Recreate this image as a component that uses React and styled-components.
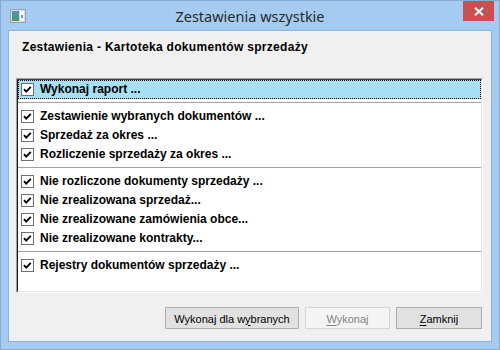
import React from "react";
import styled, { createGlobalStyle } from "styled-components";

const Global = createGlobalStyle`
  * { box-sizing: border-box; }
  html, body { margin: 0; padding: 0; background: #ffffff; }
  body { font-family: "Liberation Sans", Arial, sans-serif; }
`;

const Window = styled.div`
  width: 500px;
  height: 350px;
  background: #a6cbf0;
  border: 1px solid #86acd6;
  display: flex;
  flex-direction: column;
`;

const TitleBar = styled.div`
  height: 29px;
  display: grid;
  grid-template-columns: 1fr auto 1fr;
  align-items: center;
`;

const AppIcon = styled.svg`
  justify-self: start;
  margin-left: 9px;
  margin-top: 1px;
`;

const Title = styled.div`
  font-family: "Noto Sans", "Open Sans", sans-serif;
  font-size: 14.5px;
  color: #2a2a2a;
  line-height: 20px;
`;

const CloseButton = styled.div`
  justify-self: end;
  align-self: start;
  margin-right: 5px;
  width: 31px;
  height: 20px;
  background: #c75050;
  display: flex;
  align-items: center;
  justify-content: center;
`;

const Client = styled.div`
  flex: 1;
  margin: 0 7px 7px 7px;
  background: #f0f0f0;
  border: 1px solid #8eb2d8;
  padding: 9px 8px 12px 7px;
  display: flex;
  flex-direction: column;
`;

const Header = styled.div`
  font-weight: bold;
  font-size: 12px;
  line-height: 15px;
  letter-spacing: 0.3px;
  color: #000;
  margin-left: 6px;
`;

const ListBox = styled.div`
  margin-top: 23px;
  height: 215px;
  border-top: 1px solid #a0a0a0;
  border-left: 1px solid #a0a0a0;
  border-right: 1px solid #ffffff;
  border-bottom: 1px solid #ffffff;
`;

const ListInner = styled.div`
  height: 100%;
  background: #ffffff;
  border-top: 1px solid #404040;
  border-left: 1px solid #1a1a1a;
  border-right: 1px solid #e3e3e3;
  border-bottom: 1px solid #e3e3e3;
  display: flex;
  flex-direction: column;
`;

const Row = styled.div`
  height: 19px;
  display: flex;
  align-items: center;
  padding-left: ${(p) => (p.$selected ? "2px" : "3px")};
  gap: 6px;
  background: ${(p) => (p.$selected ? "#a7e0f4" : "transparent")};
  border: ${(p) => (p.$selected ? "1px dotted #000" : "none")};
`;

const RowText = styled.span`
  font-weight: bold;
  font-size: 12px;
  line-height: 19px;
  color: #000;
  white-space: nowrap;
`;

const Separator = styled.div`
  height: 8px;
  display: flex;
  flex-direction: column;
  justify-content: center;
  &::after {
    content: "";
    display: block;
    height: 1px;
    background: #a0a0a0;
    margin-top: -1px;
  }
`;

const ButtonRow = styled.div`
  margin-top: 14px;
  display: flex;
  justify-content: flex-end;
  gap: 6px;
  padding-right: 1px;
`;

const Button = styled.div`
  width: ${(p) => p.$w}px;
  height: 22px;
  display: flex;
  align-items: center;
  justify-content: center;
  font-size: 11px;
  font-family: "Liberation Sans", Arial, sans-serif;
  background: ${(p) => (p.$disabled ? "#f4f4f4" : "#e1e1e1")};
  border: 1px solid ${(p) => (p.$disabled ? "#d5d5d5" : "#adadad")};
  color: ${(p) => (p.$disabled ? "#838383" : "#000")};
  padding-top: 1px;
  u { text-underline-offset: 2px; }
`;

const Check = () => (
  <svg width="13" height="13" viewBox="0 0 13 13" style={{ flex: "none" }}>
    <rect x="0.5" y="0.5" width="12" height="12" fill="#fff" stroke="#707070" />
    <path d="M3 6.2 L5.2 8.6 L9.8 3.8" fill="none" stroke="#000" strokeWidth="1.8" />
  </svg>
);

const groups = [
  ["Wykonaj raport ..."],
  [
    "Zestawienie wybranych dokumentów ...",
    "Sprzedaż za okres ...",
    "Rozliczenie sprzedaży za okres ...",
  ],
  [
    "Nie rozliczone dokumenty sprzedaży ...",
    "Nie zrealizowana sprzedaż...",
    "Nie zrealizowane zamówienia obce...",
    "Nie zrealizowane kontrakty...",
  ],
  ["Rejestry dokumentów sprzedaży ..."],
];

export default function App() {
  return (
    <>
      <Global />
      <Window>
        <TitleBar>
          <AppIcon width="16" height="14" viewBox="0 0 16 14">
            <rect x="0.5" y="0.5" width="15" height="13" fill="#d8dde2" stroke="#9aa3ab" />
            <defs>
              <linearGradient id="ig" x1="0" y1="0" x2="0" y2="1">
                <stop offset="0" stopColor="#5a8fb8" />
                <stop offset="1" stopColor="#3f9a6a" />
              </linearGradient>
            </defs>
            <rect x="2" y="2" width="7" height="10" fill="url(#ig)" />
            <rect x="10" y="2" width="4" height="10" fill="#f4f6f8" />
            <rect x="11" y="6" width="2" height="3" fill="#6fa0c8" />
          </AppIcon>
          <Title>Zestawienia wszystkie</Title>
          <CloseButton>
            <svg width="10" height="9" viewBox="0 0 10 9">
              <path d="M1 0.8 L9 8.2 M9 0.8 L1 8.2" stroke="#fff" strokeWidth="2" />
            </svg>
          </CloseButton>
        </TitleBar>
        <Client>
          <Header>Zestawienia - Kartoteka dokumentów sprzedaży</Header>
          <ListBox>
            <ListInner>
              {groups.map((g, gi) => (
                <React.Fragment key={gi}>
                  {gi > 0 && <Separator />}
                  {g.map((t, i) => (
                    <Row key={t} $selected={gi === 0 && i === 0}>
                      <Check />
                      <RowText>{t}</RowText>
                    </Row>
                  ))}
                </React.Fragment>
              ))}
            </ListInner>
          </ListBox>
          <ButtonRow>
            <Button $w={134}>
              <span>
                Wykonaj dla w<u>y</u>branych
              </span>
            </Button>
            <Button $w={85} $disabled>
              <span>
                <u>W</u>ykonaj
              </span>
            </Button>
            <Button $w={86}>
              <span>
                <u>Z</u>amknij
              </span>
            </Button>
          </ButtonRow>
        </Client>
      </Window>
    </>
  );
}
